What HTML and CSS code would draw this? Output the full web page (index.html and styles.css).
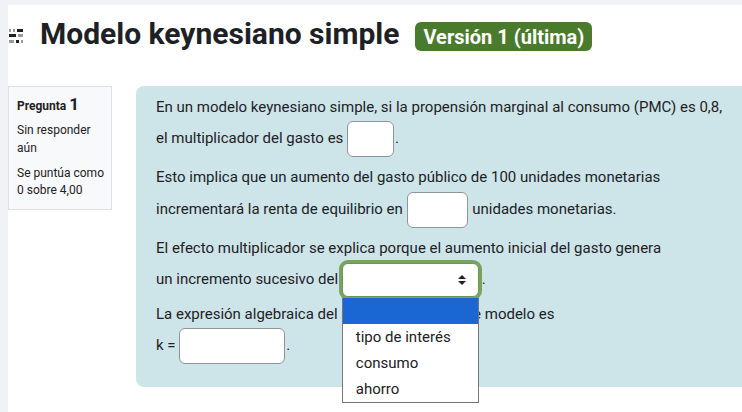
FILE: index.html
```html
<!DOCTYPE html>
<html lang="es">
<head>
<meta charset="utf-8">
<title>Modelo keynesiano simple</title>
<link rel="stylesheet" href="styles.css">
</head>
<body>
<div class="page">
  <header class="head">
    <svg class="drag" width="16" height="16" viewBox="0 0 16 16" aria-hidden="true">
      <rect x="1" y="1" width="2" height="3" fill="#9b9b9b"/>
      <rect x="5" y="1" width="2" height="3" fill="#9b9b9b"/>
      <rect x="9" y="1" width="6" height="3" fill="#1d2125"/>
      <rect x="1" y="6" width="7" height="3" fill="#1d2125"/>
      <rect x="10" y="6" width="5" height="3" fill="#9b9b9b"/>
      <rect x="1" y="12" width="5" height="3" fill="#9b9b9b"/>
      <rect x="8" y="12" width="3" height="3" fill="#1d2125"/>
      <rect x="13" y="12" width="2" height="3" fill="#9b9b9b"/>
    </svg>
    <h1 class="title">Modelo keynesiano simple</h1>
    <span class="badge">Versión 1 (última)</span>
  </header>

  <div class="que">
    <div class="info">
      <div class="qno">Pregunta <span class="num">1</span></div>
      <div class="state">Sin responder<br>aún</div>
      <div class="grade">Se puntúa como<br>0 sobre 4,00</div>
    </div>

    <div class="formulation">
      <div class="para">
        <span class="l1">En un modelo keynesiano simple, si la propensión marginal al consumo (PMC) es 0,8,</span>
        <span class="l2">el multiplicador del gasto es <span class="inp w-s"></span>.</span>
      </div>
      <div class="para">
        <span class="l1">Esto implica que un aumento del gasto público de 100 unidades monetarias</span>
        <span class="l2">incrementará la renta de equilibrio en <span class="inp w-m"></span> unidades monetarias.</span>
      </div>
      <div class="para">
        <span class="l1">El efecto multiplicador se explica porque el aumento inicial del gasto genera</span>
        <span class="l2">un incremento sucesivo del <span class="select"><svg class="arrows" width="8" height="10" viewBox="0 0 8 10" aria-hidden="true"><path d="M0 4 L4 0 L8 4 Z M0 6 L8 6 L4 10 Z" fill="#1d2125"/></svg><span class="menu"><span class="opt active"></span><span class="opt">tipo de interés</span><span class="opt">consumo</span><span class="opt">ahorro</span></span></span>.</span>
      </div>
      <div class="para">
        <span class="l1">La expresión algebraica del multiplicador en este modelo es</span>
        <span class="l2">k = <span class="inp w-l"></span>.</span>
      </div>
    </div>
  </div>
</div>
</body>
</html>
```

FILE: styles.css
```css
html, body {
  margin: 0;
  padding: 0;
  overflow: hidden;
  background: #f0f2f5;
  font-family: Roboto, "Liberation Sans", Arial, sans-serif;
  color: #1d2125;
}

.page {
  margin: 5px 0 0 8px;
  background: #ffffff;
  min-height: 420px;
}

.head {
  height: 81px;
  box-sizing: border-box;
  padding-top: 11px;
  display: flex;
  align-items: baseline;
}

.drag {
  display: block;
  margin-right: 16px;
}

.title {
  margin: 0 16px 0 0;
  font-size: 30px;
  line-height: 36px;
  font-weight: 700;
  color: #1d2125;
}

.badge {
  background: #4a7a2b;
  color: #ffffff;
  font-size: 20px;
  line-height: 24px;
  font-weight: 700;
  padding: 3px 8px 2px;
  border-radius: 6px;
}

.que {
  display: flex;
  align-items: flex-start;
  gap: 24px;
  margin-right: -24px;
}

.info {
  width: 104px;
  flex: none;
  box-sizing: border-box;
  background: #f8f9fa;
  border: 1px solid #dee2e6;
  padding: 8px 8px 10px;
  font-size: 12px;
  white-space: nowrap;
}

.qno {
  font-weight: 700;
  line-height: 22px;
  margin-bottom: 4px;
}

.qno .num {
  font-size: 17px;
  line-height: 1;
}

.state {
  line-height: 18px;
}

.grade {
  margin-top: 8px;
  line-height: 17px;
}

.formulation {
  flex: 1;
  background: #cde5e9;
  border-radius: 8px;
  padding: 10px 20px 23px;
  font-size: 15px;
  white-space: nowrap;
}

.para .l1 {
  display: block;
  line-height: 23px;
}

.para .l2 {
  display: block;
  line-height: 38px;
  height: 38px;
}

.para:nth-child(2) {
  margin-top: 8px;
}

.para:nth-child(2) .l1 {
  line-height: 25px;
}

.para:nth-child(3) {
  margin-top: 9px;
}

.para:nth-child(4) {
  margin-top: 5px;
}

.inp {
  display: inline-block;
  vertical-align: middle;
  box-sizing: border-box;
  height: 36px;
  background: #ffffff;
  border: 1px solid #8f959e;
  border-radius: 6px;
  margin-right: 1px;
}

.w-s { width: 47px; }
.w-m { width: 61px; }
.w-l { width: 106px; }

.select {
  display: inline-block;
  position: relative;
  vertical-align: middle;
  box-sizing: border-box;
  width: 137px;
  height: 34px;
  background: #ffffff;
  border: 1px solid #6a984f;
  border-radius: 6px;
  box-shadow: 0 0 0 3px #79a35e;
  margin-right: 3px;
}

.arrows {
  position: absolute;
  right: 12px;
  top: 11px;
  display: block;
}

.menu {
  position: absolute;
  left: -1px;
  top: 34px;
  width: 137px;
  box-sizing: border-box;
  background: #ffffff;
  border: 1px solid #767676;
  border-top: 0;
  z-index: 5;
  display: flex;
  flex-direction: column;
}

.opt {
  display: block;
  height: 26px;
  line-height: 26px;
  padding-left: 13px;
  font-size: 15px;
  color: #202124;
}

.opt.active {
  background: #1a66d2;
}
```
